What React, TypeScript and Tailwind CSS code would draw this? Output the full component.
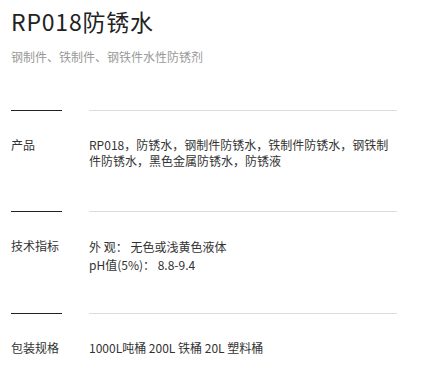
const font = { fontFamily: '"Noto Sans CJK SC", "Noto Sans", sans-serif' };

function Section({ label, pb, children }: { label: string; pb: string; children: React.ReactNode }) {
  return (
    <div>
      <div className="flex items-center">
        <div className="w-[51px] h-px bg-[#222]"></div>
        <div className="ml-[27px] w-[308px] h-px bg-[#dcdcdc]"></div>
      </div>
      <div className={`flex pt-[26px] ${pb}`}>
        <div className="w-[78px] shrink-0 text-[12px] leading-[16px] text-[#333]">{label}</div>
        <div className="w-[308px] text-[12px] leading-[16px] text-[#333]">{children}</div>
      </div>
    </div>
  );
}

export default function App() {
  return (
    <div className="min-h-screen bg-white px-[11px] pt-[5px]" style={font}>
      <h1 className="text-[23px] leading-[32px] text-[#222] tracking-[0.8px]">RP018防锈水</h1>
      <p className="mt-[12px] text-[12px] leading-[16px] text-[#999]">钢制件、铁制件、钢铁件水性防锈剂</p>

      <div className="mt-[45px]">
        <Section label="产品" pb="pb-[42px]">
          RP018，防锈水，钢制件防锈水，铁制件防锈水，钢铁制件防锈水，黑色金属防锈水，防锈液
        </Section>
        <Section label="技术指标" pb="pb-[39px]">
          <p className="leading-[18px]">外 观： 无色或浅黄色液体</p>
          <p className="leading-[18px]">pH值(5%)： 8.8-9.4</p>
        </Section>
        <Section label="包装规格" pb="pb-[36px]">1000L吨桶 200L 铁桶 20L 塑料桶</Section>
      </div>
    </div>
  );
}
